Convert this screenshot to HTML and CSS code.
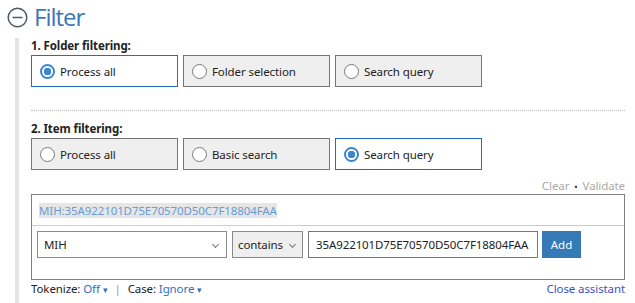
FILE: index.html
```html
<!DOCTYPE html>
<html lang="en">
<head>
    <meta charset="UTF-8">
    <title>Filter</title>
    <link rel="stylesheet" href="styles.css">
</head>
<body>
    <div class="header">
        <svg class="toggle" width="21" height="21" viewBox="0 0 21 21">
            <circle cx="10.5" cy="10.5" r="9.3" fill="none" stroke="#4b5866" stroke-width="1.5"/>
            <line x1="5.5" y1="10.5" x2="15.5" y2="10.5" stroke="#4b5866" stroke-width="1.5"/>
        </svg>
        <h2>Filter</h2>
    </div>

    <div class="section">
        <div class="group-label">1. Folder filtering:</div>
        <div class="options">
            <div class="option selected"><span class="radio"></span>Process all</div>
            <div class="option"><span class="radio"></span>Folder selection</div>
            <div class="option"><span class="radio"></span>Search query</div>
        </div>

        <div class="divider"></div>

        <div class="group-label">2. Item filtering:</div>
        <div class="options">
            <div class="option"><span class="radio"></span>Process all</div>
            <div class="option"><span class="radio"></span>Basic search</div>
            <div class="option selected"><span class="radio"></span>Search query</div>
        </div>

        <div class="query-links">
            <span>Clear</span><span class="dot">&bull;</span><span>Validate</span>
        </div>

        <div class="query-box">
            <div class="query-text"><span>MIH:35A922101D75E70570D50C7F18804FAA</span></div>
            <div class="assistant">
                <div class="select field-select">MIH<span class="chev"></span></div>
                <div class="select op-select">contains<span class="chev"></span></div>
                <div class="value-input">35A922101D75E70570D50C7F18804FAA</div>
                <button class="add-btn">Add</button>
            </div>
        </div>

        <div class="footer">
            <div class="settings">
                Tokenize: <a class="link">Off <span class="caret">&#9662;</span></a>
                <span class="sep">|</span>
                Case: <a class="link">Ignore <span class="caret">&#9662;</span></a>
            </div>
            <a class="close-link">Close assistant</a>
        </div>
    </div>
</body>
</html>
```

FILE: styles.css
```css
body {
    font-family: 'Noto Sans', 'Open Sans', sans-serif;
    font-size: 11.5px;
    letter-spacing: -0.1px;
    color: #222;
    background-color: #ffffff;
    margin: 0;
    padding: 0;
}

.header {
    display: flex;
    align-items: center;
    height: 34px;
    padding-left: 7px;
    gap: 6px;
}

.toggle {
    display: block;
}

h2 {
    margin: 0;
    font-family: 'Open Sans', sans-serif;
    font-weight: normal;
    font-size: 24px;
    letter-spacing: -1px;
    color: #3a78b6;
    line-height: 34px;
}

.section {
    margin: 4px 10px 0 15px;
    border-left: 4px solid #e4e4e4;
    padding-left: 12px;
    padding-bottom: 6px;
}

.group-label {
    font-weight: bold;
    height: 17px;
    line-height: 16px;
}

.options {
    display: flex;
    gap: 5px;
}

.option {
    box-sizing: border-box;
    width: 147px;
    height: 32px;
    display: flex;
    align-items: center;
    padding-left: 8px;
    gap: 5px;
    background-color: #efefef;
    border: 1.5px solid #767676;
}

.option .radio {
    box-sizing: border-box;
    width: 15px;
    height: 15px;
    border-radius: 50%;
    border: 1.5px solid #7a7a7a;
    background-color: #ffffff;
}

.option.selected {
    background-color: #ffffff;
    border: 1.5px solid #1e6fc1;
}

.option.selected .radio {
    border: 2px solid #3b86cf;
    background: radial-gradient(circle, #3b86cf 0, #3b86cf 3.5px, #ffffff 4px);
}

.divider {
    border-top: 1px dotted #bbbbbb;
    margin: 23px 0 10px 0;
}

.query-links {
    text-align: right;
    color: #aaaaaa;
    height: 24px;
    line-height: 31px;
}

.query-links .dot {
    color: #222;
    font-size: 9px;
    margin: 0 5px;
}

.query-box {
    box-sizing: border-box;
    border: 1.5px solid #7f7f7f;
    height: 86px;
}

.query-text {
    height: 30px;
    display: flex;
    align-items: center;
    padding-left: 7px;
    border-bottom: 1px solid #cccccc;
}

.query-text span {
    background-color: #e6e6e6;
    color: #6a9bd4;
    line-height: 15px;
}

.assistant {
    display: flex;
    gap: 5px;
    padding: 5px 0 0 5px;
}

.select, .value-input {
    box-sizing: border-box;
    height: 27px;
    border: 1px solid #8a8a8a;
    display: flex;
    align-items: center;
    padding-left: 6px;
    position: relative;
}

.field-select {
    width: 190px;
    background-color: #ffffff;
}

.op-select {
    width: 71px;
    padding-left: 5px;
    background-color: #efefef;
}

.chev {
    position: absolute;
    right: 8px;
    top: 10px;
    width: 4px;
    height: 4px;
    border-right: 1px solid #777;
    border-bottom: 1px solid #777;
    transform: rotate(45deg);
}

.op-select .chev {
    right: 7px;
}

.value-input {
    width: 230px;
    padding-left: 7px;
    border-color: #777;
}

.add-btn {
    height: 27px;
    width: 39px;
    margin-left: -1px;
    border: none;
    background-color: #337ab7;
    color: #ffffff;
    font-family: inherit;
    font-size: 11.5px;
    padding: 0;
}

.footer {
    display: flex;
    justify-content: space-between;
    height: 17px;
    line-height: 18px;
}

.link {
    color: #2d6fc9;
}

.caret {
    font-size: 9px;
}

.sep {
    color: #999;
    margin: 0 4px;
}

.close-link {
    color: #3452c8;
}
```
